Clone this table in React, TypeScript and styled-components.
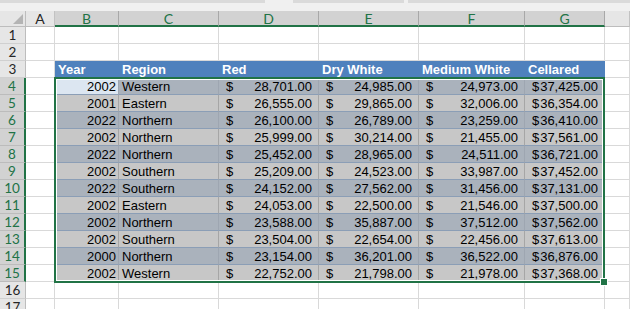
import React from "react";
import styled, { createGlobalStyle } from "styled-components";

const GREEN = "#217346";
const BLUE = "#4f81bd";

const GlobalStyle = createGlobalStyle`
  html, body { margin: 0; padding: 0; background: #ffffff; overflow: hidden; }
  * { box-sizing: border-box; }
`;

const Page = styled.div`
  width: 630px;
  height: 309px;
  overflow: hidden;
  background: #ffffff;
  font-family: "Liberation Sans", Arial, sans-serif;
`;

const TopBar = styled.div`
  display: flex;
  align-items: flex-start;
  height: 11px;
  background: #f0f0f0;
`;

const BarSeg = styled.div<{ $w: number; $gap?: boolean }>`
  flex: 0 0 ${(p) => p.$w}px;
  height: 3px;
  background: ${(p) => (p.$gap ? "transparent" : "#dadada")};
`;

const Sheet = styled.div`
  position: relative;
  display: grid;
  grid-template-columns: 26px 29px 64px 100px 100px 100px 106px 80px 1fr;
  grid-template-rows: 16px;
  grid-auto-rows: 17px;
`;

const Corner = styled.div`
  background: #e6e6e6;
  border-right: 1px solid #bdbdbd;
  border-bottom: 1px solid #bdbdbd;
  svg { display: block; }
`;

const ColHead = styled.div<{ $sel?: boolean }>`
  background: ${(p) => (p.$sel ? "#d2d2d2" : "#e6e6e6")};
  color: ${(p) => (p.$sel ? GREEN : "#262626")};
  border-right: 1px solid ${(p) => (p.$sel ? "#a8a8a8" : "#c2c2c2")};
  border-bottom: ${(p) => (p.$sel ? `2px solid ${GREEN}` : "1px solid #bdbdbd")};
  font-family: Lato, "Liberation Sans", sans-serif;
  font-size: 14px;
  line-height: 14px;
  padding-top: 1px;
  text-align: center;
`;

const RowHead = styled.div<{ $sel?: boolean }>`
  background: ${(p) => (p.$sel ? "#d2d2d2" : "#e6e6e6")};
  color: ${(p) => (p.$sel ? GREEN : "#262626")};
  border-right: ${(p) => (p.$sel ? `2px solid ${GREEN}` : "1px solid #bdbdbd")};
  border-bottom: 1px solid ${(p) => (p.$sel ? "#bcbcbc" : "#d0d0d0")};
  font-family: Lato, "Liberation Sans", sans-serif;
  font-size: 13.5px;
  line-height: 16px;
  text-align: center;
`;

const Cell = styled.div`
  background: #ffffff;
  border-right: 1px solid #d9d9d9;
  border-bottom: 1px solid #d9d9d9;
`;

const HeadCell = styled.div`
  background: ${BLUE};
  border-right: 1px solid ${BLUE};
  border-bottom: 1px solid ${BLUE};
  color: #ffffff;
  font-weight: 700;
  font-size: 13px;
  line-height: 16px;
  padding: 1px 0 0 3px;
  white-space: nowrap;
`;

const DataCell = styled.div<{ $band: boolean; $active?: boolean; $right?: boolean }>`
  background: ${(p) => (p.$active ? "#dce6f1" : p.$band ? "#aab2bc" : "#c7c7c7")};
  border-right: 1px solid ${(p) => (p.$band ? "#9ea6b1" : "#a6a6a6")};
  border-bottom: 1px solid #8b9eb6;
  color: #000000;
  font-size: 13px;
  line-height: 16px;
  padding: 1px ${(p) => (p.$right ? "2px" : "0")} 0 ${(p) => (p.$right ? "0" : "3px")};
  text-align: ${(p) => (p.$right ? "right" : "left")};
  white-space: nowrap;
`;

const MoneyCell = styled(DataCell)<{ $last?: boolean }>`
  display: flex;
  justify-content: space-between;
  padding: 1px ${(p) => (p.$last ? "6px" : "6px")} 0 ${(p) => (p.$last ? "7px" : "7px")};
`;

const Selection = styled.div`
  position: absolute;
  left: 54px;
  top: 66px;
  width: 551px;
  height: 206px;
  border: 2px solid ${GREEN};
  box-shadow: inset 0 0 0 1px #ffffff;
  pointer-events: none;
`;

const FillHandle = styled.div`
  position: absolute;
  left: 600px;
  top: 267px;
  width: 8px;
  height: 8px;
  background: ${GREEN};
  border: 1px solid #ffffff;
`;

const letters = ["A", "B", "C", "D", "E", "F", "G", ""];
const headers = ["Year", "Region", "Red", "Dry White", "Medium White", "Cellared"];

const data: [number, string, string, string, string, string][] = [
  [2002, "Western", "28,701.00", "24,985.00", "24,973.00", "37,425.00"],
  [2001, "Eastern", "26,555.00", "29,865.00", "32,006.00", "36,354.00"],
  [2022, "Northern", "26,100.00", "26,789.00", "23,259.00", "36,410.00"],
  [2002, "Northern", "25,999.00", "30,214.00", "21,455.00", "37,561.00"],
  [2022, "Northern", "25,452.00", "28,965.00", "24,511.00", "36,721.00"],
  [2002, "Southern", "25,209.00", "24,523.00", "33,987.00", "37,452.00"],
  [2022, "Southern", "24,152.00", "27,562.00", "31,456.00", "37,131.00"],
  [2002, "Eastern", "24,053.00", "22,500.00", "21,546.00", "37,500.00"],
  [2002, "Northern", "23,588.00", "35,887.00", "37,512.00", "37,562.00"],
  [2002, "Southern", "23,504.00", "22,654.00", "22,456.00", "37,613.00"],
  [2000, "Northern", "23,154.00", "36,201.00", "36,522.00", "36,876.00"],
  [2002, "Western", "22,752.00", "21,798.00", "21,978.00", "37,368.00"],
];

function EmptyCells({ n }: { n: number }) {
  return (
    <>
      {Array.from({ length: n }).map((_, i) => (
        <Cell key={i} />
      ))}
    </>
  );
}

export default function App() {
  const rows: React.ReactNode[] = [];
  for (let r = 1; r <= 17; r++) {
    const sel = r >= 4 && r <= 15;
    rows.push(
      <RowHead key={`h${r}`} $sel={sel}>
        {r}
      </RowHead>
    );
    if (r === 3) {
      rows.push(<Cell key="a3" />);
      headers.forEach((h) => rows.push(<HeadCell key={`hd${h}`}>{h}</HeadCell>));
      rows.push(<Cell key="h3x" />);
    } else if (sel) {
      const d = data[r - 4];
      const band = (r - 4) % 2 === 0;
      rows.push(<Cell key={`a${r}`} />);
      rows.push(
        <DataCell key={`y${r}`} $band={band} $active={r === 4} $right>
          {d[0]}
        </DataCell>
      );
      rows.push(
        <DataCell key={`g${r}`} $band={band}>
          {d[1]}
        </DataCell>
      );
      [d[2], d[3], d[4], d[5]].forEach((v, i) =>
        rows.push(
          <MoneyCell key={`m${r}-${i}`} $band={band} $last={i === 3}>
            <span>$</span>
            <span>{v}</span>
          </MoneyCell>
        )
      );
      rows.push(<Cell key={`x${r}`} />);
    } else {
      rows.push(<EmptyCells key={`e${r}`} n={8} />);
    }
  }

  return (
    <Page>
      <GlobalStyle />
      <TopBar>
        <BarSeg $w={265} />
        <BarSeg $w={28} $gap />
        <BarSeg $w={111} />
        <BarSeg $w={4} $gap />
        <BarSeg $w={222} />
      </TopBar>
      <Sheet>
        <Corner>
          <svg width="25" height="15" viewBox="0 0 25 15">
            <polygon points="13,13 23,13 23,3" fill="#b4b4b4" />
          </svg>
        </Corner>
        {letters.map((l, i) => (
          <ColHead key={`c${i}`} $sel={i >= 1 && i <= 6}>
            {l}
          </ColHead>
        ))}
        {rows}
        <Selection />
        <FillHandle />
      </Sheet>
    </Page>
  );
}
